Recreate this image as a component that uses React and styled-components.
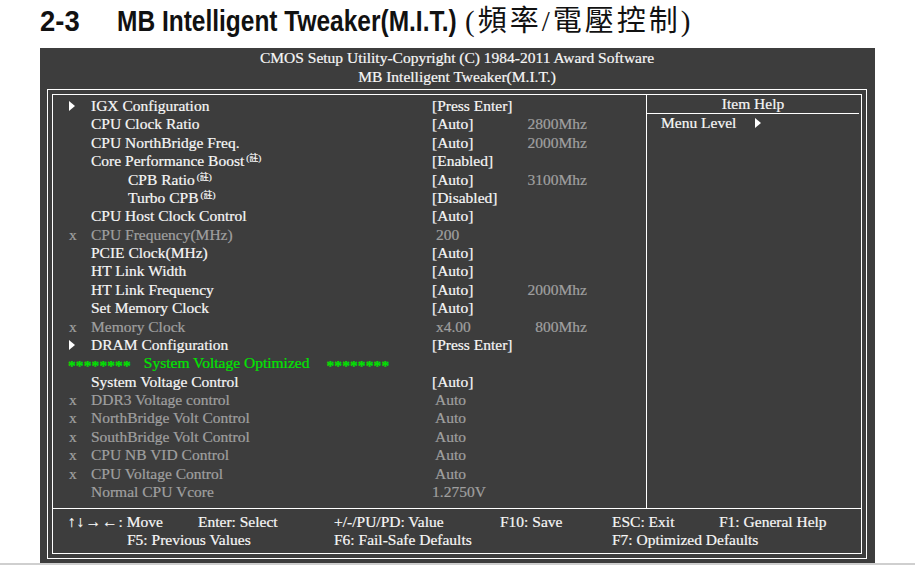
import React from "react";
import styled, { createGlobalStyle } from "styled-components";

const GlobalStyle = createGlobalStyle`
  html, body {
    margin: 0;
    padding: 0;
    background: #fff;
  }
  body {
    font-family: "Liberation Serif", "Times New Roman", serif;
  }
`;

const rows = [
  { mark: "arrow", label: "IGX Configuration", value: "[Press Enter]" },
  { label: "CPU Clock Ratio", value: "[Auto]", extra: "2800Mhz" },
  { label: "CPU NorthBridge Freq.", value: "[Auto]", extra: "2000Mhz" },
  { label: "Core Performance Boost", note: true, value: "[Enabled]" },
  { label: "CPB Ratio", note: true, indent: true, value: "[Auto]", extra: "3100Mhz" },
  { label: "Turbo CPB", note: true, indent: true, value: "[Disabled]" },
  { label: "CPU Host Clock Control", value: "[Auto]" },
  { mark: "x", label: "CPU Frequency(MHz)", value: " 200", dim: true },
  { label: "PCIE Clock(MHz)", value: "[Auto]" },
  { label: "HT Link Width", value: "[Auto]" },
  { label: "HT Link Frequency", value: "[Auto]", extra: "2000Mhz" },
  { label: "Set Memory Clock", value: "[Auto]" },
  { mark: "x", label: "Memory Clock", value: " x4.00", extra: "800Mhz", dim: true },
  { mark: "arrow", label: "DRAM Configuration", value: "[Press Enter]" },
  { banner: "System Voltage Optimized" },
  { label: "System Voltage Control", value: "[Auto]" },
  { mark: "x", label: "DDR3 Voltage control", value: " Auto", dim: true },
  { mark: "x", label: "NorthBridge Volt Control", value: " Auto", dim: true },
  { mark: "x", label: "SouthBridge Volt Control", value: " Auto", dim: true },
  { mark: "x", label: "CPU NB VID Control", value: " Auto", dim: true },
  { mark: "x", label: "CPU Voltage Control", value: " Auto", dim: true },
  { label: "Normal CPU Vcore", value: "1.2750V", dim: true },
];

const Arrow = () => (
  <svg width="6" height="10" viewBox="0 0 6 10">
    <polygon points="0,0 6,5 0,10" fill="#fff" />
  </svg>
);

const App = () => {
  return (
    <Page>
      <GlobalStyle />
      <Heading>
        <Num>
          <Squeeze $x={0.93}>2-3</Squeeze>
        </Num>
        <Title>
          <Squeeze $x={0.83}>MB Intelligent Tweaker(M.I.T.)</Squeeze>
        </Title>
        <Cjk>(頻率/電壓控制)</Cjk>
      </Heading>
      <Panel>
        <Banner>
          <div>CMOS Setup Utility-Copyright (C) 1984-2011 Award Software</div>
          <div>MB Intelligent Tweaker(M.I.T.)</div>
        </Banner>
        <OuterFrame>
          <InnerFrame>
            <Main>
              <List>
                {rows.map((r, i) =>
                  r.banner ? (
                    <GreenRow key={i}>
                      <Stars>********</Stars>
                      <span>{r.banner}</span>
                      <Stars>********</Stars>
                    </GreenRow>
                  ) : (
                    <Row key={i}>
                      <Mark>
                        {r.mark === "arrow" && <Arrow />}
                        {r.mark === "x" && "x"}
                      </Mark>
                      <Label $dim={r.dim} $indent={r.indent}>
                        {r.label}
                        {r.note && <Note>(註)</Note>}
                      </Label>
                      <Value $dim={r.dim}>{r.value}</Value>
                      <Extra>{r.extra}</Extra>
                    </Row>
                  )
                )}
              </List>
              <Help>
                <HelpTitle>Item Help</HelpTitle>
                <HelpLine>
                  Menu Level
                  <Arrow />
                </HelpLine>
              </Help>
            </Main>
            <Footer>
              <Key $col="1 / 3">
                <Arrows>↑↓→←</Arrows>: Move
              </Key>
              <Key $col="3">Enter: Select</Key>
              <Key $col="4">+/-/PU/PD: Value</Key>
              <Key $col="5">F10: Save</Key>
              <Key $col="6">ESC: Exit</Key>
              <Key $col="7">F1: General Help</Key>
              <Key $col="2 / 4">F5: Previous Values</Key>
              <Key $col="4 / 6">F6: Fail-Safe Defaults</Key>
              <Key $col="6 / 8">F7: Optimized Defaults</Key>
            </Footer>
          </InnerFrame>
        </OuterFrame>
      </Panel>
      <BottomRule />
    </Page>
  );
};

const Page = styled.div`
  width: 915px;
  height: 565px;
  box-sizing: border-box;
  padding: 3px 0 0 40px;
  display: flex;
  flex-direction: column;
  overflow: hidden;
`;

const Heading = styled.div`
  display: flex;
  align-items: baseline;
  height: 36px;
  line-height: 36px;
  margin-bottom: 9px;
  color: #111;
  white-space: nowrap;
`;

const Num = styled.span`
  width: 77px;
  font-family: "Liberation Sans", Arial, sans-serif;
  font-weight: bold;
  font-size: 29.5px;
`;

const Title = styled.span`
  width: 340px;
  font-family: "Liberation Sans", Arial, sans-serif;
  font-weight: bold;
  font-size: 29.5px;
`;

const Squeeze = styled.span`
  display: inline-block;
  transform: scaleX(${(p) => p.$x});
  transform-origin: left center;
`;

const Cjk = styled.span`
  margin-left: 8px;
  font-family: "Liberation Serif", "Noto Sans CJK TC", serif;
  font-size: 29px;
  letter-spacing: 3px;
`;

const Panel = styled.div`
  width: 835px;
  height: 515px;
  box-sizing: border-box;
  background: #3d3d3d;
  padding: 0 8px 4px 7px;
  display: flex;
  flex-direction: column;
  font-size: 15.5px;
  color: #f7f7f7;
  -webkit-text-stroke: 0.2px currentColor;
`;

const Banner = styled.div`
  text-align: center;
  line-height: 19px;
  margin-bottom: 3px;
`;

const OuterFrame = styled.div`
  flex: 1;
  border: 1px solid #fff;
  padding: 4px;
  display: flex;
`;

const InnerFrame = styled.div`
  flex: 1;
  border: 1px solid #fff;
  display: flex;
  flex-direction: column;
`;

const Main = styled.div`
  height: 413px;
  display: flex;
  border-bottom: 1px solid #fff;
`;

const List = styled.div`
  width: 594px;
  border-right: 1px solid #fff;
  padding: 2px 0 0 15px;
  box-sizing: border-box;
`;

const Row = styled.div`
  display: grid;
  grid-template-columns: 23px 341px 95px 60px;
  height: 18.38px;
  line-height: 18.38px;
  white-space: pre;
`;

const Mark = styled.span`
  color: #a0a0a0;
  padding-left: 1px;
  display: flex;
  align-items: center;
`;

const Label = styled.span`
  color: ${(p) => (p.$dim ? "#a0a0a0" : "#f7f7f7")};
  padding-left: ${(p) => (p.$indent ? "37px" : "0")};
`;

const Note = styled.sup`
  font-family: "Liberation Serif", "Noto Sans CJK TC", serif;
  font-size: 9px;
  margin-left: 2px;
  vertical-align: 5px;
  line-height: 0;
`;

const Value = styled.span`
  color: ${(p) => (p.$dim ? "#a0a0a0" : "#f7f7f7")};
`;

const Extra = styled.span`
  color: #a0a0a0;
  text-align: right;
`;

const GreenRow = styled.div`
  display: flex;
  align-items: center;
  gap: 13px;
  height: 18.38px;
  line-height: 18.38px;
  white-space: pre;
  color: #00e600;
  & > span:last-child {
    margin-left: 4px;
  }
`;

const Stars = styled.span`
  font-weight: bold;
  letter-spacing: 0.1px;
  position: relative;
  top: 3px;
`;

const Help = styled.div`
  flex: 1;
`;

const HelpTitle = styled.div`
  text-align: center;
  line-height: 18px;
  border-bottom: 1px solid #fff;
  margin-right: 2px;
`;

const HelpLine = styled.div`
  display: flex;
  align-items: center;
  gap: 19px;
  line-height: 18px;
  padding-left: 14px;
`;

const Footer = styled.div`
  flex: 1;
  display: grid;
  grid-template-columns: 59px 71px 136px 166px 112px 107px 1fr;
  grid-auto-rows: 18px;
  line-height: 18px;
  padding: 4px 0 0 15px;
  white-space: nowrap;
`;

const Key = styled.span`
  grid-column: ${(p) => p.$col};
`;

const Arrows = styled.span`
  letter-spacing: 1px;
`;

const BottomRule = styled.div`
  height: 2px;
  background: #cfcfcf;
  margin-left: -40px;
`;

export default App;
